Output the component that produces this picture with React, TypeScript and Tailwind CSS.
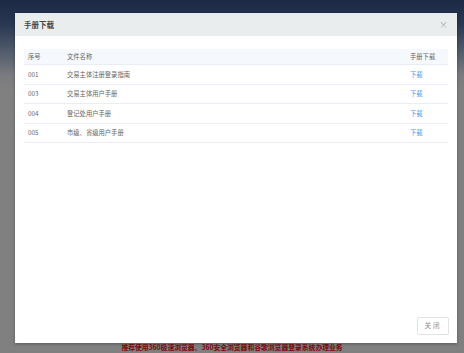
import React from "react";

const rows = [
  { no: "001", name: "交易主体注册登录指南" },
  { no: "003", name: "交易主体用户手册" },
  { no: "004", name: "登记处用户手册" },
  { no: "005", name: "市级、省级用户手册" },
];

export default function App() {
  return (
    <div
      className="relative w-[464px] h-[353px] overflow-hidden bg-[linear-gradient(180deg,#1c2944_0px,#2a3853_25px,#56606f_55px,#7a7b7e_75px,#808080_90px,#808080_100%)]"
      style={{ fontFamily: '"Noto Sans CJK SC", "Noto Sans", sans-serif' }}
    >
      {/* page notice behind the overlay */}
      <div className="absolute left-0 right-0 top-[342px] text-center text-[6.8px] font-bold leading-[10px] text-[#7a0a0a]">
        推荐使用360极速浏览器、360安全浏览器和谷歌浏览器登录系统办理业务
      </div>

      {/* dialog */}
      <div className="absolute left-[15px] top-[13px] w-[442px] h-[330px] bg-white flex flex-col shadow-[0_1px_3px_rgba(0,0,0,0.3)]">
        <div className="h-[23px] bg-[#eaeded] flex items-center justify-between pl-[9px] pr-[9px]">
          <span className="text-[7.5px] font-bold text-[#444]">手册下载</span>
          <span className="text-[9px] leading-none text-[#aaa]">×</span>
        </div>

        <div className="flex-1 px-[9px] pt-[13px]">
          <div className="w-full text-[6.3px] text-[#666]">
            <div className="flex items-center h-[16px] bg-[#f5f9fd] border-b border-[#e9eef4]">
              <span className="w-[43px] pl-[4px]">序号</span>
              <span className="flex-1">文件名称</span>
              <span className="w-[38px]">手册下载</span>
            </div>
            {rows.map((r) => (
              <div key={r.no} className="flex items-center h-[19.5px] border-b border-[#e9eef4]">
                <span className="w-[43px] pl-[4px]">{r.no}</span>
                <span className="flex-1">{r.name}</span>
                <span className="w-[38px] text-[#3f9cf0]">下载</span>
              </div>
            ))}
          </div>
        </div>

        <div className="flex justify-end px-[8px] pb-[8px]">
          <button className="w-[32px] h-[18px] border border-[#e3e3e3] rounded-[2px] text-[6.5px] text-[#888] tracking-[2px] bg-white">
            关闭
          </button>
        </div>
      </div>
    </div>
  );
}
